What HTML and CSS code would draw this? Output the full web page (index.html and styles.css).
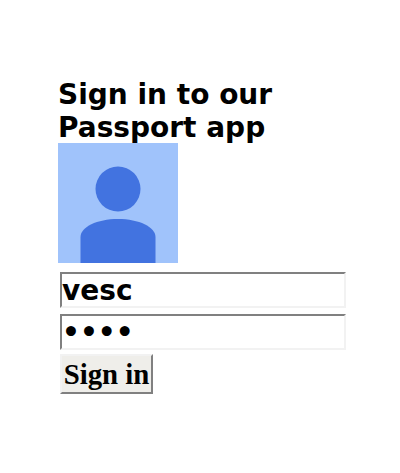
FILE: index.html
```html
<!DOCTYPE html>
<html lang="en">
<head>
  <meta charset="UTF-8">
  <title>Sign in</title>
  <link rel="stylesheet" href="styles.css">
</head>
<body>
  <div class="container">
    <h1>Sign in to our Passport app</h1>
    <svg class="avatar" width="120" height="120" viewBox="0 0 120 120">
      <rect width="120" height="120" fill="#a0c3fb"/>
      <circle cx="60" cy="46" r="22.5" fill="#4273e0"/>
      <path d="M22.5 120V94C22.5 84 39 76 60 76S97.5 84 97.5 94V120Z" fill="#4273e0"/>
    </svg>
    <form class="signin">
      <input type="text" value="vesc">
      <input type="password" value="1234">
      <button type="button">Sign in</button>
    </form>
  </div>
</body>
</html>
```

FILE: styles.css
```css
html, body {
  margin: 0;
  background: #fff;
}
.container {
  width: 300px;
  padding: 78px 0 0 58px;
}
h1 {
  margin: 0 0 -1px;
  font-family: "DejaVu Sans", sans-serif;
  font-size: 28px;
  font-weight: bold;
  line-height: 33px;
  color: #000;
}
.avatar {
  display: block;
}
.signin {
  display: flex;
  flex-direction: column;
  align-items: flex-start;
  gap: 6px;
  padding: 9px 0 0 2px;
}
input {
  box-sizing: border-box;
  width: 286px;
  height: 36px;
  margin: 0;
  padding: 1px 0;
  border: 2px solid;
  border-color: #808080 #f2f2f2 #f2f2f2 #808080;
  background: #fff;
  font-family: "DejaVu Sans", sans-serif;
  font-size: 28px;
  font-weight: bold;
  color: #000;
  outline: none;
}
button {
  box-sizing: border-box;
  width: 93px;
  height: 40px;
  margin: -2px 0 0;
  padding: 0;
  border: 2px solid;
  border-color: #f2f2f2 #808080 #808080 #f2f2f2;
  background: #efeeea;
  font-family: "Liberation Serif", serif;
  font-size: 28.8px;
  font-weight: bold;
  color: #000;
}
```
